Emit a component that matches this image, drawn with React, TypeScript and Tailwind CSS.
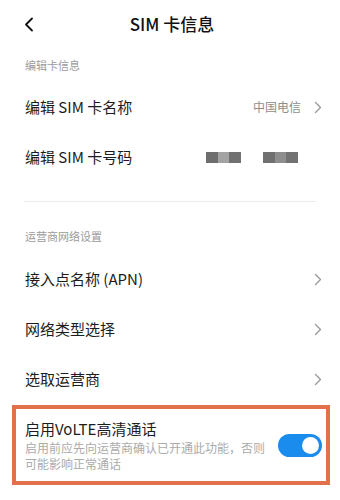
const font = { fontFamily: '"Noto Sans CJK SC", "Noto Sans", sans-serif' }

function ChevronRight() {
  return (
    <svg width="8" height="13" viewBox="0 0 8 13" fill="none" className="shrink-0">
      <polyline points="1.5,1.5 6.5,6.5 1.5,11.5" stroke="#9a9a9a" strokeWidth="1.4" strokeLinecap="round" strokeLinejoin="round" />
    </svg>
  )
}

function SectionLabel({ text, h }: { text: string; h: string }) {
  return (
    <div className={`${h} flex items-center px-[25px] text-[11px] text-[#9b9b9b]`}>{text}</div>
  )
}

function Row({ label, value, masked }: { label: string; value?: string; masked?: boolean }) {
  return (
    <div className="h-[50px] flex items-center justify-between pl-[25px] pr-[18px]">
      <span className="text-[15px] text-[#1c1c1c]">{label}</span>
      {masked ? (
        <div className="flex items-center gap-[22px] mr-[24px]">
          <div className="flex h-[11px]">
            <div className="w-[12px] bg-[#6e6e6e]" />
            <div className="w-[11px] bg-[#a3a3a3]" />
            <div className="w-[12px] bg-[#717171]" />
          </div>
          <div className="flex h-[11px]">
            <div className="w-[12px] bg-[#707070]" />
            <div className="w-[11px] bg-[#8e8e8e]" />
            <div className="w-[12px] bg-[#727272]" />
          </div>
        </div>
      ) : (
        <div className="flex items-center gap-[13px]">
          {value && <span className="text-[12px] text-[#8d8d8d]">{value}</span>}
          <ChevronRight />
        </div>
      )}
    </div>
  )
}

export default function App() {
  return (
    <div className="w-[340px] h-[500px] bg-white overflow-hidden" style={font}>
      <header className="h-12 flex items-center relative">
        <svg width="10" height="15" viewBox="0 0 10 15" fill="none" className="ml-[24px]">
          <polyline points="8,1.5 2,7.5 8,13.5" stroke="#111" strokeWidth="1.8" strokeLinecap="round" strokeLinejoin="round" />
        </svg>
        <h1 className="absolute left-0 right-0 text-center text-[17px] font-medium text-[#111] pl-[4px]">SIM 卡信息</h1>
      </header>

      <SectionLabel text="编辑卡信息" h="h-[34px]" />
      <Row label="编辑 SIM 卡名称" value="中国电信" />
      <Row label="编辑 SIM 卡号码" masked />

      <div className="mt-[19px] mx-[24px] h-px bg-[#ececec]" />

      <SectionLabel text="运营商网络设置" h="h-[35px] mt-[17px]" />
      <Row label="接入点名称 (APN)" />
      <Row label="网络类型选择" />
      <Row label="选取运营商" />

      <div className="ml-[12px] mr-[10px] mt-px border-4 border-[#e2704a] flex items-center justify-between pl-[9px] pr-[4px] pt-[10px] pb-[9px]">
        <div className="w-[245px]">
          <div className="text-[15px] leading-[20px] text-[#1c1c1c]">启用VoLTE高清通话</div>
          <div className="mt-px text-[12px] leading-[16px] text-[#ababab]">
            启用前应先向运营商确认已开通此功能，否则可能影响正常通话
          </div>
        </div>
        <div className="w-[44px] h-[23px] rounded-full bg-[#1a8cee] flex items-center justify-end pr-[3px]">
          <div className="w-[17px] h-[17px] rounded-full bg-white" />
        </div>
      </div>
    </div>
  )
}
